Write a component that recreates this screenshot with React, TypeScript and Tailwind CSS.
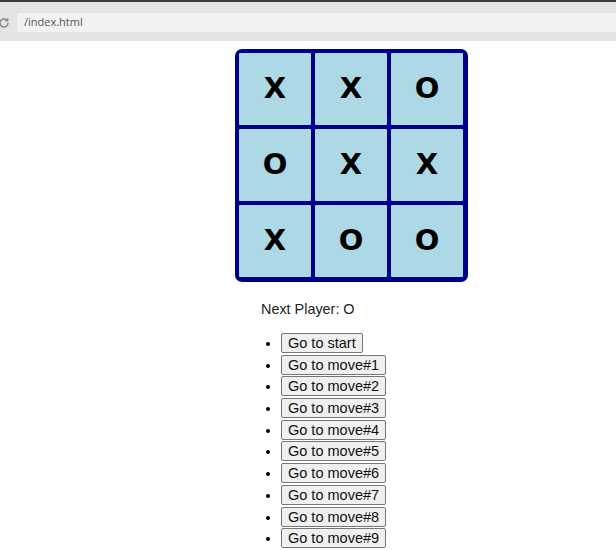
import React from "react";

const squares = ["X", "X", "O", "O", "X", "X", "X", "O", "O"];

function BrowserBar() {
  return (
    <div className="h-[41px] bg-[#e4e4e4] border-t-[2px] border-[#3b3b3b] flex items-center">
      <svg
        width="12"
        height="12"
        viewBox="0 0 12 12"
        className="ml-[-2px] mt-[2px]"
        fill="none"
        stroke="#8a8a8a"
        strokeWidth="1.6"
      >
        <path d="M10 6a4 4 0 1 1-1.2-2.9" />
        <path d="M9.6 1.2v2.6H7" />
      </svg>
      <div className="ml-[7px] mt-[2px] h-[19px] flex-1 rounded-l-[3px] bg-[#f2f2f2] flex items-center pl-[7px] text-[11px] text-[#555] font-['Open_Sans',sans-serif]">
        /index.html
      </div>
    </div>
  );
}

function Board() {
  return (
    <div className="grid grid-cols-[72px_72px_72px] gap-[4px] pt-[4px] pl-[4px] pr-[5px] pb-[5px] bg-[#00008b] rounded-[7px] w-fit">
      {squares.map((value, index) => (
        <div
          key={index}
          className="h-[72px] bg-[#add8e6] flex items-center justify-center text-[29px] font-black text-black font-['DejaVu_Sans',sans-serif] rounded-[1px]"
        >
          {value}
        </div>
      ))}
    </div>
  );
}

export default function App() {
  const moves = ["Go to start"];
  for (let i = 1; i <= 9; i++) moves.push(`Go to move#${i}`);

  return (
    <div className="w-[616px] h-[550px] bg-white overflow-hidden font-['Liberation_Sans',Arial,sans-serif]">
      <BrowserBar />
      <div className="pl-[235px] pt-[8px]">
        <Board />
        <div className="ml-[26px] mt-[19px] text-[14.4px] leading-[17px] text-[#222]">
          Next Player: O
        </div>
        <ul className="list-disc ml-[26px] pl-[20px] mt-[15px] text-[14.4px]">
          {moves.map((move) => (
            <li key={move} className="h-[21.7px] leading-[20px]">
              <button className="h-[20px] px-[6px] leading-[16px] text-[14.5px] text-[#111] bg-[#f0f0f0] border border-[#767676] rounded-[2px] align-top">
                {move}
              </button>
            </li>
          ))}
        </ul>
      </div>
    </div>
  );
}
